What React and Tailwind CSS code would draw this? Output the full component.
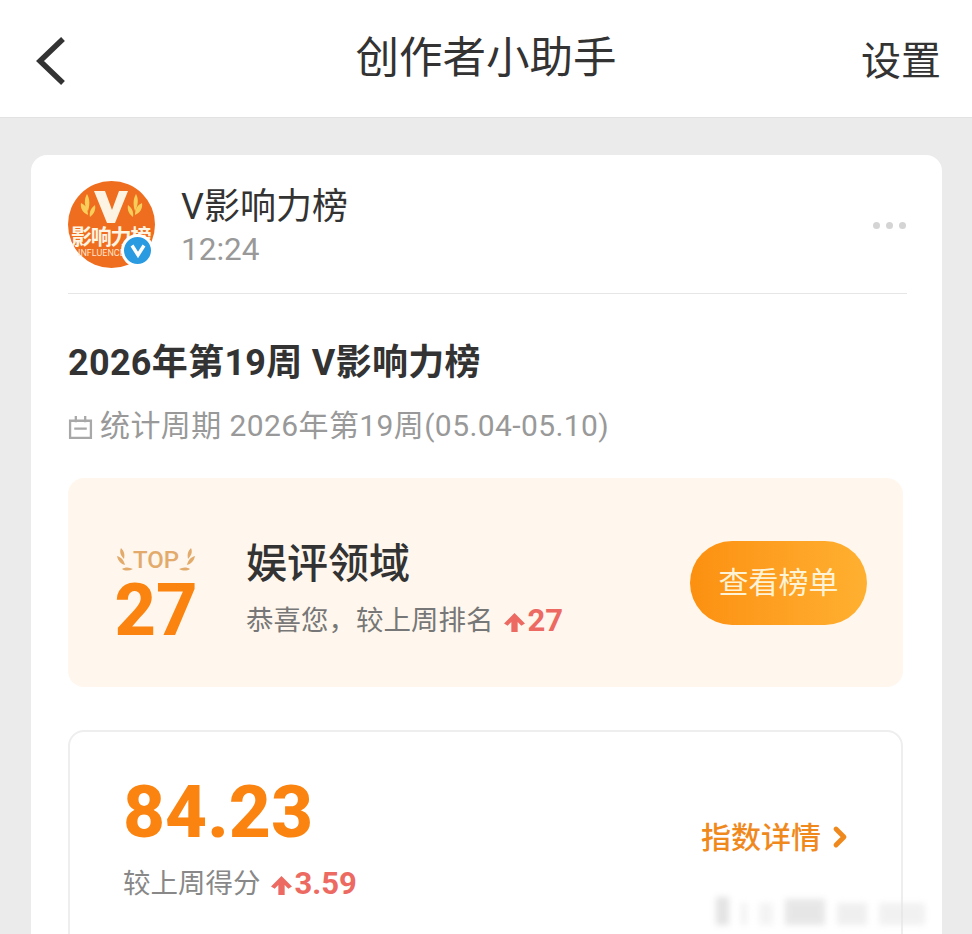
import { ChevronRight } from 'lucide-react'

const font = "font-['Roboto','Noto_Sans_CJK_SC',sans-serif]"

function UpArrow({ className }) {
  return (
    <svg viewBox="0 0 20 20" className={className} fill="currentColor">
      <path d="M10 1 20 11l-3.5 2-3.5-3.5V19H7V9.500L3.500 13 0 11Z" />
    </svg>
  )
}

function Wheat() {
  return (
    <svg viewBox="0 0 16 24" className="w-[16px] h-[24px]" fill="currentColor">
      <path d="M4 0c3 3 4 6 3 11C4 8 2 4 4 0ZM0 8c4 1 7 4 8 9-4-1-7-4-8-9ZM5 21c3-2 7-2 11 0-4 2-8 2-11 0Z" />
    </svg>
  )
}

function Avatar() {
  return (
    <div className="relative w-[87px] h-[87px] shrink-0 overflow-visible">
      <svg viewBox="0 0 87 87" className="w-full h-full">
        <circle cx="43.5" cy="43.5" r="43.5" fill="#ef6d1e" />
        <path d="M26 10h11l7 19 7-19h9L47 42h-8Z" fill="#fdf3e2" />
        <path d="M19 13c3 5 3 11 1 17-4-5-4-12-1-17ZM13 22c5 2 7 7 7 12-5-2-8-7-7-12ZM27 24c1 5-1 9-5 12-1-5 1-9 5-12Z" fill="#f8cd5a" />
        <path d="M68 13c3 5 2 12-1 17-2-6-2-12 1-17ZM74 22c1 5-2 10-7 12 0-5 2-10 7-12ZM60 24c4 3 6 7 5 12-4-3-6-7-5-12Z" fill="#f8cd5a" />
      </svg>
      <span className="absolute left-[3px] top-[44px] text-[21px] leading-[24px] font-bold text-[#fff5e2] whitespace-nowrap tracking-[-1.2px]">影响力榜</span>
      <span className="absolute left-[10px] top-[67px] text-[9px] leading-[10px] text-[#ffe3c9] whitespace-nowrap">INFLUENCE</span>
      <span className="absolute left-[53px] top-[53px] w-[33px] h-[33px] rounded-full bg-[#2a9be0] border-[3px] border-white flex items-center justify-center">
        <svg viewBox="0 0 20 20" className="w-[20px] h-[20px]" fill="none" stroke="white" strokeWidth="3.4">
          <path d="M4 5.500 10 15l6-9.500" />
        </svg>
      </span>
    </div>
  )
}

function TopBadge() {
  return (
    <div className="w-[178px] shrink-0 flex flex-col items-center pr-[2px] mt-[24px]">
      <div className="flex items-center h-[28px] text-[#e2ab6c]">
        <Wheat />
        <span className="text-[24px] leading-[28px] font-medium">TOP</span>
        <div className="-scale-x-100"><Wheat /></div>
      </div>
      <div className="text-[72px] leading-[64px] font-extrabold text-[#fb8410] mt-[5px]">27</div>
    </div>
  )
}

export default function App() {
  return (
    <div className={`h-[934px] overflow-hidden bg-[#ebebeb] relative ${font}`}>
      {/* Header */}
      <div className="h-[118px] bg-white border-b border-[#e2e2e2] flex items-center justify-between pl-[35px] pr-[31px]">
        <svg viewBox="0 0 32 50" className="w-[32px] h-[50px] mt-[4px]" fill="none" stroke="#333" strokeWidth="5.500">
          <path d="M28 3 5 25l23 22" />
        </svg>
        <h1 className="text-[43.5px] leading-[60px] text-[#333] ml-[44px]">创作者小助手</h1>
        <span className="text-[40px] leading-[60px] text-[#333] mt-[6px]">设置</span>
      </div>

      {/* Card */}
      <div className="mt-[37px] mx-[31px] w-[911px] bg-white rounded-t-[16px] pl-[37px] pr-[35px] h-[800px]">
        <div className="flex items-center h-[139px] border-b border-[#e6e6e6]">
          <Avatar />
          <div className="ml-[26px] flex flex-col mt-[3px]">
            <span className="text-[36px] leading-[48px] text-[#333]">V影响力榜</span>
            <span className="text-[31.5px] leading-[36px] text-[#999] mt-[1px]">12:24</span>
          </div>
          <div className="ml-auto mr-[1px] flex gap-[6px] mt-[2px]">
            <i className="w-[7px] h-[7px] rounded-full bg-[#d4d4d4]" />
            <i className="w-[7px] h-[7px] rounded-full bg-[#d4d4d4]" />
            <i className="w-[7px] h-[7px] rounded-full bg-[#d4d4d4]" />
          </div>
        </div>

        <h2 className="mt-[44px] text-[36px] leading-[50px] font-bold text-[#333] tracking-[0.3px]">2026年第19周 V影响力榜</h2>

        <div className="mt-[16px] flex items-center text-[30px] leading-[44px] text-[#999] tracking-[0.4px]">
          <svg viewBox="0 0 24 24" className="w-[25px] h-[25px] mr-[7px] mt-[2px]" fill="none" stroke="#a8a8a8" strokeWidth="2.2">
            <path d="M2 5.500h20V22H2Z" />
            <path d="M7.500 1v6M16.500 1v6M6 13h12" />
          </svg>
          统计周期 2026年第19周(05.04-05.10)
        </div>

        {/* Rank panel */}
        <div className="mt-[30px] w-[835px] h-[209px] rounded-[16px] bg-[#fff7ee] flex items-center pr-[36px]">
          <TopBadge />
          <div className="flex flex-col mt-[12px]">
            <span className="text-[41px] leading-[56px] font-medium text-[#333]">娱评领域</span>
            <div className="mt-[9px] flex items-center text-[27.5px] leading-[40px] text-[#777]">
              恭喜您，较上周排名
              <span className="ml-[10px] flex items-center text-[#ec6a62] font-bold text-[31px]">
                <UpArrow className="w-[21px] h-[21px] mt-[2px] mr-[3px]" />27
              </span>
            </div>
          </div>
          <div className="ml-auto w-[177px] h-[84px] rounded-full bg-gradient-to-r from-[#fc900f] to-[#ffb030] text-[#fff3d6] text-[30px] flex items-center justify-center">
            查看榜单
          </div>
        </div>

        {/* Score panel */}
        <div className="mt-[43px] w-[835px] h-[300px] rounded-t-[16px] border-2 border-[#eeeeee] pl-[53px] pr-[45px] pt-[32px] flex justify-between">
          <div className="flex flex-col">
            <span className="text-[73px] leading-[96px] font-extrabold text-[#fb8410]">84.23</span>
            <div className="mt-[4px] flex items-center text-[27.5px] leading-[40px] text-[#888]">
              较上周得分
              <span className="ml-[10px] flex items-center text-[#ec6a62] font-bold text-[31px]">
                <UpArrow className="w-[21px] h-[21px] mt-[2px] mr-[3px]" />3.59
              </span>
            </div>
          </div>
          <div className="flex items-center h-[84px] mt-[31px] text-[30px] font-medium text-[#f0891d]">
            指数详情
            <ChevronRight className="w-[32px] h-[32px] ml-[3px]" strokeWidth={3.6} />
          </div>
        </div>
      </div>

      {/* Watermark */}
      <div className="absolute left-[716px] top-[897px] flex items-end gap-[12px] blur-[3px] opacity-50">
        <i className="w-[13px] h-[28px] bg-[#c8c8c8]" />
        <i className="w-[6px] h-[22px] bg-[#e4e4e4]" />
        <i className="w-[14px] h-[22px] bg-[#e8e8e8]" />
        <i className="w-[40px] h-[26px] bg-[#cfcfcf]" />
        <i className="w-[30px] h-[22px] bg-[#e0e0e0]" />
        <i className="w-[46px] h-[22px] bg-[#e4e4e4]" />
      </div>
    </div>
  )
}
